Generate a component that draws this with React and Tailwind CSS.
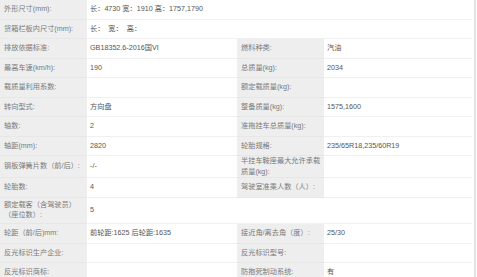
import React from 'react';

const rows = [
  { l1: '外形尺寸(mm):', v1: '长：4730 宽：1910 高：1757,1790', span: true },
  { l1: '货箱栏板内尺寸(mm):', v1: '长：  宽：  高：', span: true },
  { l1: '排放依据标准:', v1: 'GB18352.6-2016国VI', l2: '燃料种类:', v2: '汽油' },
  { l1: '最高车速(km/h):', v1: '190', l2: '总质量(kg):', v2: '2034' },
  { l1: '载质量利用系数:', v1: '', l2: '额定载质量(kg):', v2: '' },
  { l1: '转向型式:', v1: '方向盘', l2: '整备质量(kg):', v2: '1575,1600' },
  { l1: '轴数:', v1: '2', l2: '准拖挂车总质量(kg):', v2: '' },
  { l1: '轴距(mm):', v1: '2820', l2: '轮胎规格:', v2: '235/65R18,235/60R19' },
  { l1: '钢板弹簧片数（前/后）:', v1: '-/-', l2: '半挂车鞍座最大允许承载质量(kg):', v2: '', h: 'h-[22px]' },
  { l1: '轮胎数:', v1: '4', l2: '驾驶室准乘人数（人）:', v2: '' },
  { l1: '额定载客（含驾驶员）（座位数）:', v1: '5', l2: null, v2: '', h: 'h-[26.5px]' },
  { l1: '轮距（前/后)mm:', v1: '前轮距:1625 后轮距:1635', l2: '接近角/离去角（度）:', v2: '25/30' },
  { l1: '反光标识生产企业:', v1: '', l2: '反光标识型号:', v2: '' },
  { l1: '反光标识商标:', v1: '', l2: '防抱死制动系统:', v2: '有' },
];

const Label = ({ children, empty }) => (
  <div
    className={`w-[87px] shrink-0 flex items-center pl-[4px] pr-[2px] border-b ${
      empty ? 'bg-white border-[#f2f2f2]' : 'bg-[#eeeeee] border-[#e7e7e7]'
    } text-[#7a7a7a]`}
  >
    <span className="leading-[10.5px]">{children}</span>
  </div>
);

const Value = ({ children, w }) => (
  <div className={`${w} shrink-0 flex items-center pl-[3px] border-b border-[#f0f0f0] text-[#555]`}>
    <span className="leading-[10.5px] whitespace-pre">{children}</span>
  </div>
);

export default function App() {
  return (
    <div
      className="w-[477px] h-[277px] overflow-hidden bg-white flex"
      style={{ fontFamily: '"Liberation Sans", "Noto Sans CJK SC", sans-serif' }}
    >
      <div className="w-[472px] shrink-0 flex flex-col text-[7.2px]">
        {rows.map((r, i) => (
          <div key={i} className={`flex shrink-0 ${r.h || 'h-[19.5px]'}`}>
            <Label>{r.l1}</Label>
            {r.span ? (
              <Value w="w-[385px]">{r.v1}</Value>
            ) : (
              <>
                <Value w="w-[150px]">{r.v1}</Value>
                <Label empty={r.l2 === null}>{r.l2}</Label>
                <Value w="w-[148px]">{r.v2}</Value>
              </>
            )}
          </div>
        ))}
      </div>
      <div className="w-[1.5px] shrink-0" />
      <div className="w-[2px] shrink-0 bg-[#e4e4e4]" />
    </div>
  );
}
